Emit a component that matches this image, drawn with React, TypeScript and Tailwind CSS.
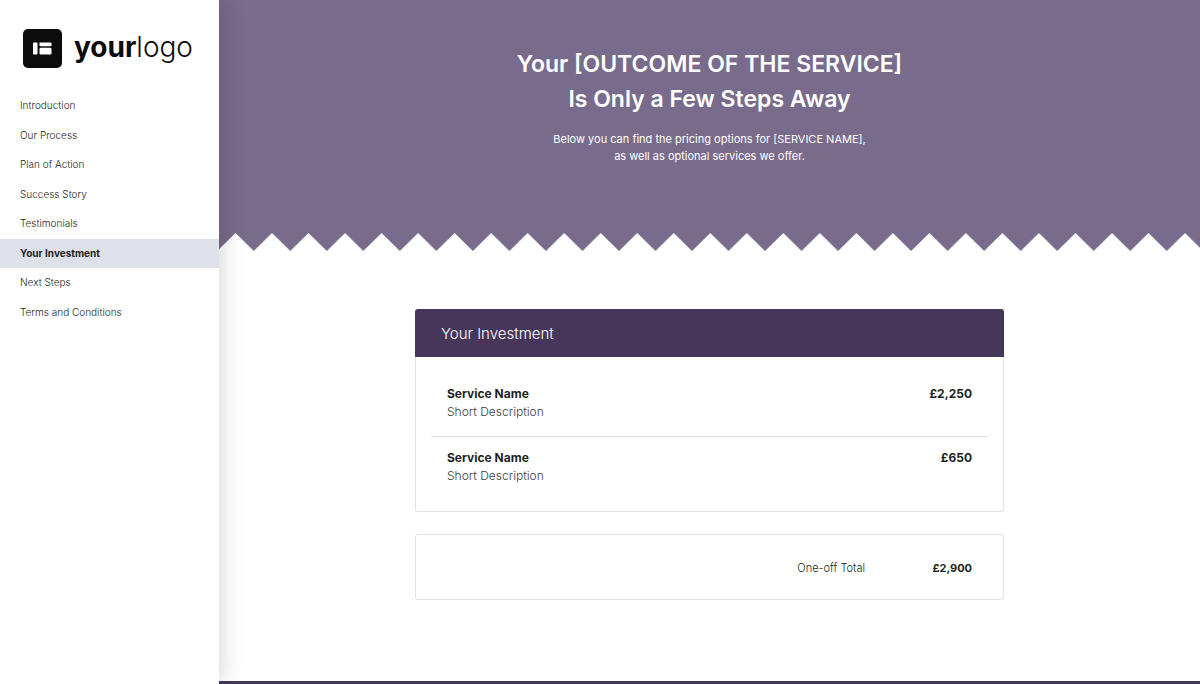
const navItems = [
  "Introduction",
  "Our Process",
  "Plan of Action",
  "Success Story",
  "Testimonials",
  "Your Investment",
  "Next Steps",
  "Terms and Conditions",
];

const services = [
  { id: 1, name: "Service Name", description: "Short Description", price: "£2,250" },
  { id: 2, name: "Service Name", description: "Short Description", price: "£650" },
];

const App = () => {
  return (
    <div className="flex min-h-screen bg-white font-['Inter','Open_Sans',sans-serif] text-[#1d1f22]">
      <Sidebar active="Your Investment" />
      <main className="flex min-w-0 flex-1 flex-col">
        <Hero />
        <div className="mx-auto flex w-full max-w-[589px] flex-1 flex-col gap-[22px] pt-[58px] pb-16">
          <InvestmentCard />
          <TotalCard />
        </div>
        <div className="h-[3px] bg-[#46375a]" />
      </main>
    </div>
  );
};

export default App;

interface SidebarProps {
  active: string;
}

function Sidebar({ active }: SidebarProps) {
  return (
    <aside className="relative z-10 w-[219px] shrink-0 bg-white shadow-[0_0_24px_rgba(0,0,0,0.2)]">
      <a href="#" className="flex h-[91px] items-center gap-3 pt-[5px] pl-[23px]">
        <LogoMark />
        <span className="pb-[2px] text-[28px] leading-9 text-[#0c0c0c]">
          <span className="font-bold">your</span>
          <span className="font-light">logo</span>
        </span>
      </a>
      <nav className="grid h-[236px] grid-rows-8">
        {navItems.map((item) => (
          <a
            key={item}
            href="#"
            className={`flex items-center px-5 text-[10px] ${
              item === active ? "bg-[#dee1e9] font-bold" : "font-light"
            }`}
          >
            {item}
          </a>
        ))}
      </nav>
    </aside>
  );
}

function LogoMark() {
  return (
    <svg className="h-[39px] w-[39px] shrink-0" viewBox="0 0 39 39" aria-hidden="true">
      <rect width="39" height="39" rx="5" fill="#0c0c0c" />
      <g fill="#fff">
        <rect x="10" y="13.5" width="4.5" height="12" rx="1" />
        <path d="M16.5 13.5h11a1 1 0 0 1 1 1v1.7l-1 1h-10l-1-1z" />
        <path d="M16.5 19.5l1-.8h10l1 .8v5a1 1 0 0 1-1 1h-10a1 1 0 0 1-1-1z" />
      </g>
    </svg>
  );
}

function Hero() {
  return (
    <header>
      <div className="h-[233px] bg-[#796b8b] px-4 pt-[47px] text-center text-white">
        <h1 className="text-[23px] leading-[35px] font-semibold">
          Your [OUTCOME OF THE SERVICE]
          <br />
          Is Only a Few Steps Away
        </h1>
        <p className="mt-[14px] text-[11px] leading-[17px]">
          Below you can find the pricing options for [SERVICE NAME],
          <br />
          as well as optional services we offer.
        </p>
      </div>
      <svg className="block h-[18px] w-full" aria-hidden="true">
        <defs>
          <pattern id="zigzag" x="-1.75" width="36.52" height="18" patternUnits="userSpaceOnUse">
            <path d="M0 18V0H36.52V18L18.26 0z" fill="#796b8b" />
          </pattern>
        </defs>
        <rect width="100%" height="18" fill="url(#zigzag)" />
      </svg>
    </header>
  );
}

function InvestmentCard() {
  return (
    <section>
      <h2 className="rounded-t-[3px] bg-[#46375a] px-[26px] pt-px text-[15px] leading-[47px] font-light text-white">
        Your Investment
      </h2>
      <ul className="rounded-b-[3px] border border-t-0 border-[#e2e2e5] px-[15px] pt-4 pb-[11px]">
        {services.map((service) => (
          <li
            key={service.id}
            className="flex justify-between border-b border-[#e2e2e5] px-4 pt-3 pb-[15px] leading-[18px] last:border-b-0"
          >
            <div>
              <h3 className="text-[12px] font-bold">{service.name}</h3>
              <p className="text-[12px] font-light text-[#3c4043]">{service.description}</p>
            </div>
            <p className="text-[12px] font-bold">{service.price}</p>
          </li>
        ))}
      </ul>
    </section>
  );
}

function TotalCard() {
  return (
    <section className="flex h-[66px] items-center justify-end rounded-[3px] border border-[#e2e2e5] px-[31px] pt-[3px]">
      <p className="text-[11px] font-light">One-off Total</p>
      <p className="w-[107px] text-right text-[11px] font-bold">£2,900</p>
    </section>
  );
}
